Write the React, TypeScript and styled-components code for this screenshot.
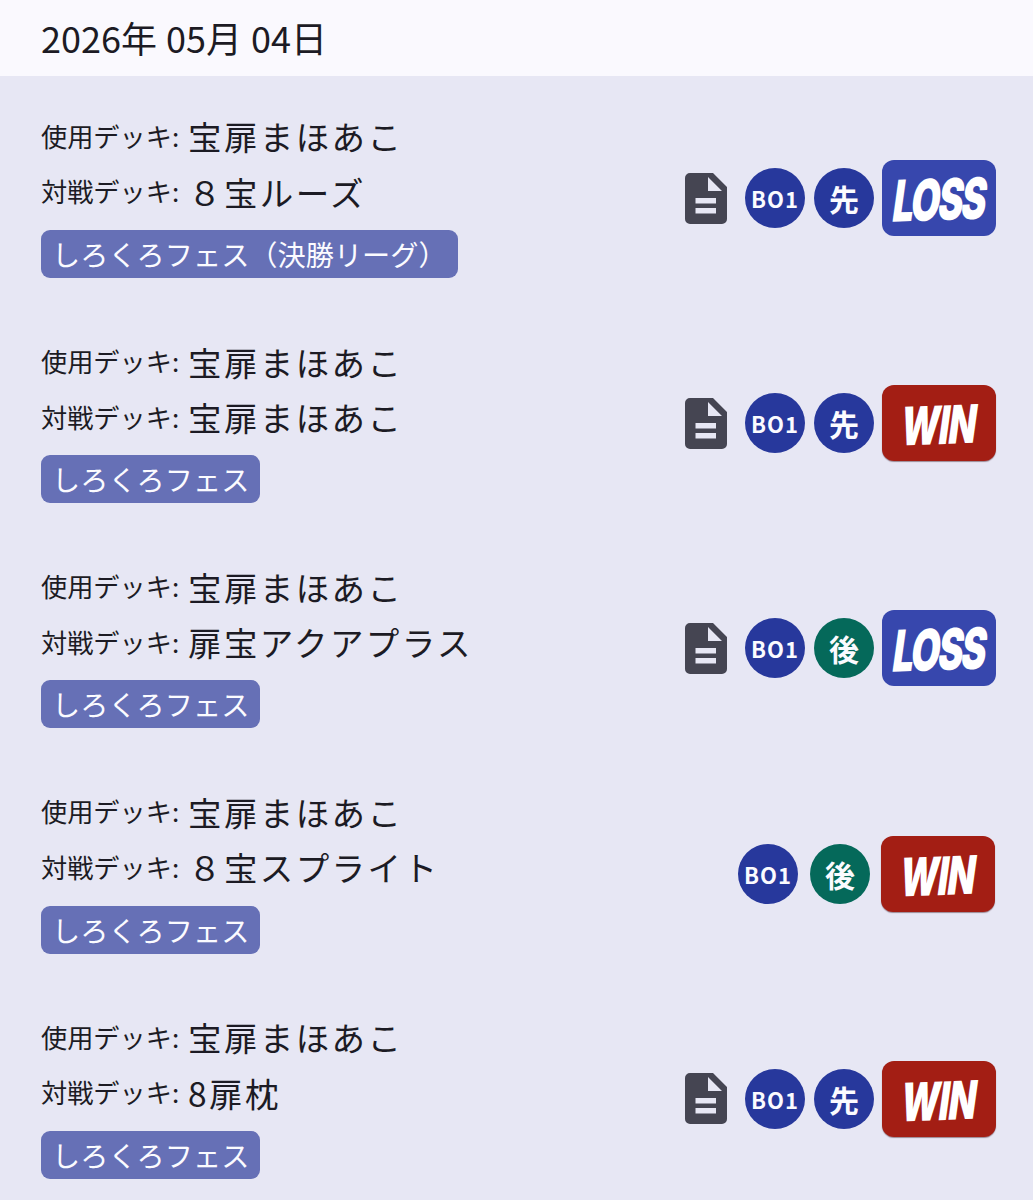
import styled, { createGlobalStyle } from 'styled-components';

const GlobalStyle = createGlobalStyle`
  html, body {
    margin: 0;
    padding: 0;
    background: #e7e7f4;
  }
  body {
    font-family: "Noto Sans CJK JP", "Noto Sans", sans-serif;
    color: #1c1b24;
  }
`;

type Match = {
  deck: string;
  opponent: string;
  tag: string;
  turn: '先' | '後';
  result: 'WIN' | 'LOSS';
  memo: boolean;
};

const matches: Match[] = [
  { deck: '宝扉まほあこ', opponent: '８宝ルーズ', tag: 'しろくろフェス（決勝リーグ）', turn: '先', result: 'LOSS', memo: true },
  { deck: '宝扉まほあこ', opponent: '宝扉まほあこ', tag: 'しろくろフェス', turn: '先', result: 'WIN', memo: true },
  { deck: '宝扉まほあこ', opponent: '扉宝アクアプラス', tag: 'しろくろフェス', turn: '後', result: 'LOSS', memo: true },
  { deck: '宝扉まほあこ', opponent: '８宝スプライト', tag: 'しろくろフェス', turn: '後', result: 'WIN', memo: false },
  { deck: '宝扉まほあこ', opponent: '8扉枕', tag: 'しろくろフェス', turn: '先', result: 'WIN', memo: true },
];

const MemoIcon = () => (
  <MemoSvg viewBox="0 0 42 51" aria-hidden="true">
    <path
      fill="#454552"
      fillRule="evenodd"
      d="M5 0H28L42 14V46a5 5 0 0 1-5 5H5a5 5 0 0 1-5-5V5a5 5 0 0 1 5-5ZM23 4V18H37ZM10.500 25V30.500H31V25ZM10.500 35V40.500H31V35Z"
    />
  </MemoSvg>
);

const App = () => {
  return (
    <>
      <GlobalStyle />
      <DateBar>2026年 05月 04日</DateBar>
      <List>
        {matches.map((match, i) => (
          <Row key={i}>
            <Info>
              <Line>
                <Label>使用デッキ:</Label>
                <DeckName>{match.deck}</DeckName>
              </Line>
              <Line>
                <Label>対戦デッキ:</Label>
                <DeckName>{match.opponent}</DeckName>
              </Line>
              <Tag>{match.tag}</Tag>
            </Info>
            <Badges>
              {match.memo && <MemoIcon />}
              <Circles $memo={match.memo}>
                <Circle $color="#27389c">
                  <BoText>BO1</BoText>
                </Circle>
                <Circle $color={match.turn === '先' ? '#27389c' : '#05695a'}>{match.turn}</Circle>
              </Circles>
              <Result $win={match.result === 'WIN'} $memo={match.memo}>
                <ResultText $win={match.result === 'WIN'}>{match.result}</ResultText>
              </Result>
            </Badges>
          </Row>
        ))}
      </List>
    </>
  );
};

export default App;

const DateBar = styled.header`
  height: 76px;
  box-sizing: border-box;
  padding-left: 41px;
  background: #faf9fe;
  font-size: 36px;
  line-height: 75px;
  word-spacing: 1px;
  white-space: pre;
`;

const List = styled.main`
  background: #e7e7f4;
  height: 1124px;
  overflow: hidden;
  padding-top: 5px;
  box-sizing: border-box;
`;

const Row = styled.section`
  height: 225.2px;
  display: flex;
  align-items: center;
  justify-content: space-between;
  padding: 0 37px 0 41px;
  box-sizing: border-box;
`;

const Info = styled.div`
  display: flex;
  flex-direction: column;
  align-items: flex-start;
`;

const Line = styled.div`
  display: flex;
  align-items: center;
  height: 55.5px;
  white-space: nowrap;
`;

const Label = styled.span`
  font-size: 26.2px;
  width: 147px;
  flex: none;
  position: relative;
  top: -1px;
`;

const DeckName = styled.span`
  font-size: 33.5px;
  letter-spacing: 2.4px;
  position: relative;
  top: -1px;
`;

const Tag = styled.div`
  margin-top: 10px;
  height: 48px;
  line-height: 47px;
  padding: 0 11px;
  border-radius: 9px;
  background: #6670b6;
  color: #fbfbff;
  font-size: 28.2px;
  white-space: nowrap;
`;

const Badges = styled.div`
  display: flex;
  align-items: center;
  margin-top: 9px;
`;

const MemoSvg = styled.svg`
  width: 42px;
  height: 51px;
  flex: none;
  margin-right: 18px;
`;

const Circles = styled.div<{ $memo: boolean }>`
  display: flex;
  gap: ${(p) => (p.$memo ? '9px' : '12px')};
  margin-right: ${(p) => (p.$memo ? '8px' : '11px')};
`;

const Circle = styled.div<{ $color: string }>`
  width: 60px;
  height: 60px;
  border-radius: 50%;
  background: ${(p) => p.$color};
  color: #fbfbff;
  display: flex;
  align-items: center;
  justify-content: center;
  font-size: 30px;
  font-weight: 700;
`;

const BoText = styled.span`
  font-size: 22px;
  letter-spacing: 1px;
`;

const Result = styled.div<{ $win: boolean; $memo: boolean }>`
  width: 114px;
  height: 76px;
  border-radius: 12px;
  margin-right: ${(p) => (p.$memo ? '0' : '1px')};
  background: ${(p) => (p.$win ? '#a31e14' : '#3747ad')};
  box-shadow: ${(p) => (p.$win ? '0 1px 1px rgba(60, 20, 30, 0.45)' : 'none')};
  display: flex;
  align-items: center;
  justify-content: center;
  overflow: hidden;
`;

const ResultText = styled.span<{ $win: boolean }>`
  font-family: "Inter", "Liberation Sans", sans-serif;
  font-size: ${(p) => (p.$win ? '50px' : '54px')};
  font-weight: 900;
  color: #ffffff;
  letter-spacing: ${(p) => (p.$win ? '-1px' : '-3px')};
  transform: translateY(2px) rotate(-2deg) skewX(-10deg) scaleX(${(p) => (p.$win ? 0.72 : 0.7)}) scaleY(1.06);
  line-height: 1;
`;
